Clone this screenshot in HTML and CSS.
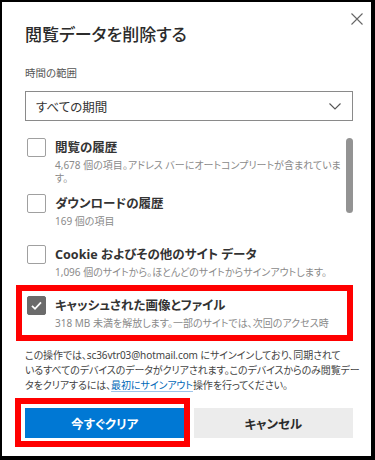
FILE: index.html
```html
<!DOCTYPE html>
<html lang="ja">
<head>
<meta charset="utf-8">
<link rel="stylesheet" href="styles.css">
</head>
<body>
<div class="panel">
  <div class="header">
    <h1 class="title">閲覧データを削除する</h1>
    <span class="close">
      <svg width="12" height="12" viewBox="0 0 12 12"><path d="M0.5 0.5 L11.5 11.5 M11.5 0.5 L0.5 11.5" stroke="#666" stroke-width="1.1" fill="none"/></svg>
    </span>
  </div>
  <div class="label">時間の範囲</div>
  <div class="select">
    <span>すべての期間</span>
    <svg width="12" height="7" viewBox="0 0 12 7"><polyline points="0.5,0.5 6,6 11.5,0.5" stroke="#555" stroke-width="1.1" fill="none"/></svg>
  </div>
  <div class="list-wrap">
    <div class="list">
      <div class="item">
        <span class="box"></span>
        <div class="text">
          <div class="name">閲覧の履歴</div>
          <div class="desc">4,678 個の項目。アドレス バーにオートコンプリートが含まれていま</div>
          <div class="desc cont">す。</div>
        </div>
      </div>
      <div class="item">
        <span class="box"></span>
        <div class="text">
          <div class="name">ダウンロードの履歴</div>
          <div class="desc">169 個の項目</div>
        </div>
      </div>
      <div class="item">
        <span class="box"></span>
        <div class="text">
          <div class="name">Cookie およびその他のサイト データ</div>
          <div class="desc">1,096 個のサイトから。ほとんどのサイトからサインアウトします。</div>
        </div>
      </div>
      <div class="item">
        <span class="box checked">
          <svg width="19" height="19" viewBox="0 0 19 19"><path d="M5 9.8 L8 12.8 L14 6.3" stroke="#fff" stroke-width="1.8" fill="none"/></svg>
        </span>
        <div class="text">
          <div class="name">キャッシュされた画像とファイル</div>
          <div class="desc">318 MB 未満を解放します。一部のサイトでは、次回のアクセス時</div>
        </div>
      </div>
    </div>
    <div class="scrollbar"><div class="thumb"></div></div>
    <div class="mark mark-item"></div>
  </div>
  <p class="note">この操作では、sc36vtr03@hotmail.com にサインインしており、同期されて<br>いるすべてのデバイスのデータがクリアされます。このデバイスからのみ閲覧デー<br>タをクリアするには、<a class="link">最初にサインアウト</a>操作を行ってください。</p>
  <div class="buttons">
    <button class="btn primary">今すぐクリア</button>
    <button class="btn secondary">キャンセル</button>
    <div class="mark mark-btn"></div>
  </div>
</div>
</body>
</html>
```
FILE: styles.css
```css
* { box-sizing: border-box; }
html, body { margin: 0; padding: 0; }
body {
  background: #000;
  width: 375px;
  height: 460px;
  overflow: hidden;
  font-family: "Noto Sans", "Noto Sans CJK JP", sans-serif;
  font-feature-settings: "palt";
}
.panel {
  margin: 2px 4px 4px 2px;
  width: 369px;
  height: 454px;
  background: #fff;
  padding: 11px 18px 0 23px;
}
.header {
  display: flex;
  justify-content: space-between;
  align-items: flex-start;
}
.title {
  margin: 10px 0 0;
  font-size: 17px;
  line-height: 24px;
  font-weight: 500;
  color: #2b2b2b;
}
.close {
  display: block;
  width: 12px;
  height: 12px;
  margin-right: -10px;
}
.close svg { display: block; }
.label {
  margin-top: 19px;
  font-size: 10.5px;
  line-height: 15px;
  color: #555;
}
.select {
  margin-top: 10px;
  height: 30px;
  border: 1px solid #8a8a8a;
  display: flex;
  align-items: center;
  justify-content: space-between;
  padding: 0 11px 0 10px;
  font-size: 12.5px;
  color: #333;
}
.select svg { display: block; margin-top: 1px; }
.list-wrap {
  position: relative;
  margin-top: 10px;
  display: flex;
  height: 198px;
}
.list {
  flex: 1;
  height: 198px;
  overflow: hidden;
  padding: 7px 0 0 2px;
  display: flex;
  flex-direction: column;
  gap: 10px;
  margin-right: 3px;
}
.item {
  flex: none;
  display: flex;
  align-items: flex-start;
  gap: 9px;
  min-height: 41px;
}
.box {
  flex: none;
  width: 19px;
  height: 19px;
  border: 1px solid #a0a0a0;
  border-radius: 2px;
}
.box.checked {
  background: #6b6b6b;
  border-color: #6b6b6b;
}
.box.checked svg {
  display: block;
  margin: -1px;
}
.text { min-width: 0; flex: 1; }
.name {
  font-size: 12.5px;
  line-height: 19px;
  font-weight: 700;
  color: #333;
  white-space: nowrap;
}
.desc {
  margin-top: 2px;
  font-size: 10px;
  line-height: 12.5px;
  color: #8a8a8a;
  white-space: nowrap;
}
.desc.cont { margin-top: 0; }
.scrollbar {
  flex: none;
  width: 7px;
  padding-top: 7px;
}
.thumb {
  width: 7px;
  height: 75px;
  border-radius: 4px;
  background: #939393;
}
.mark {
  position: absolute;
  border: 6px solid #f00;
  pointer-events: none;
}
.mark-item {
  left: -9px;
  top: 154px;
  width: 337px;
  height: 56px;
}
.note {
  margin: 19px 0 0;
  font-size: 10px;
  line-height: 15px;
  letter-spacing: -0.1px;
  color: #444;
  white-space: nowrap;
}
.link {
  color: #0067b8;
  text-decoration: underline;
  text-decoration-color: #9cc4ea;
  text-underline-offset: 2px;
}
.buttons {
  position: relative;
  margin-top: 15px;
  display: flex;
  gap: 9px;
}
.btn {
  flex: 1;
  height: 30px;
  border: none;
  font-family: inherit;
  font-feature-settings: "palt";
  font-size: 12.5px;
  font-weight: 700;
  padding: 0;
}
.primary {
  background: #0078d4;
  color: #fff;
}
.secondary {
  background: #ececec;
  color: #2b2b2b;
}
.mark-btn {
  left: -10px;
  top: -10px;
  width: 175px;
  height: 49px;
}
```
